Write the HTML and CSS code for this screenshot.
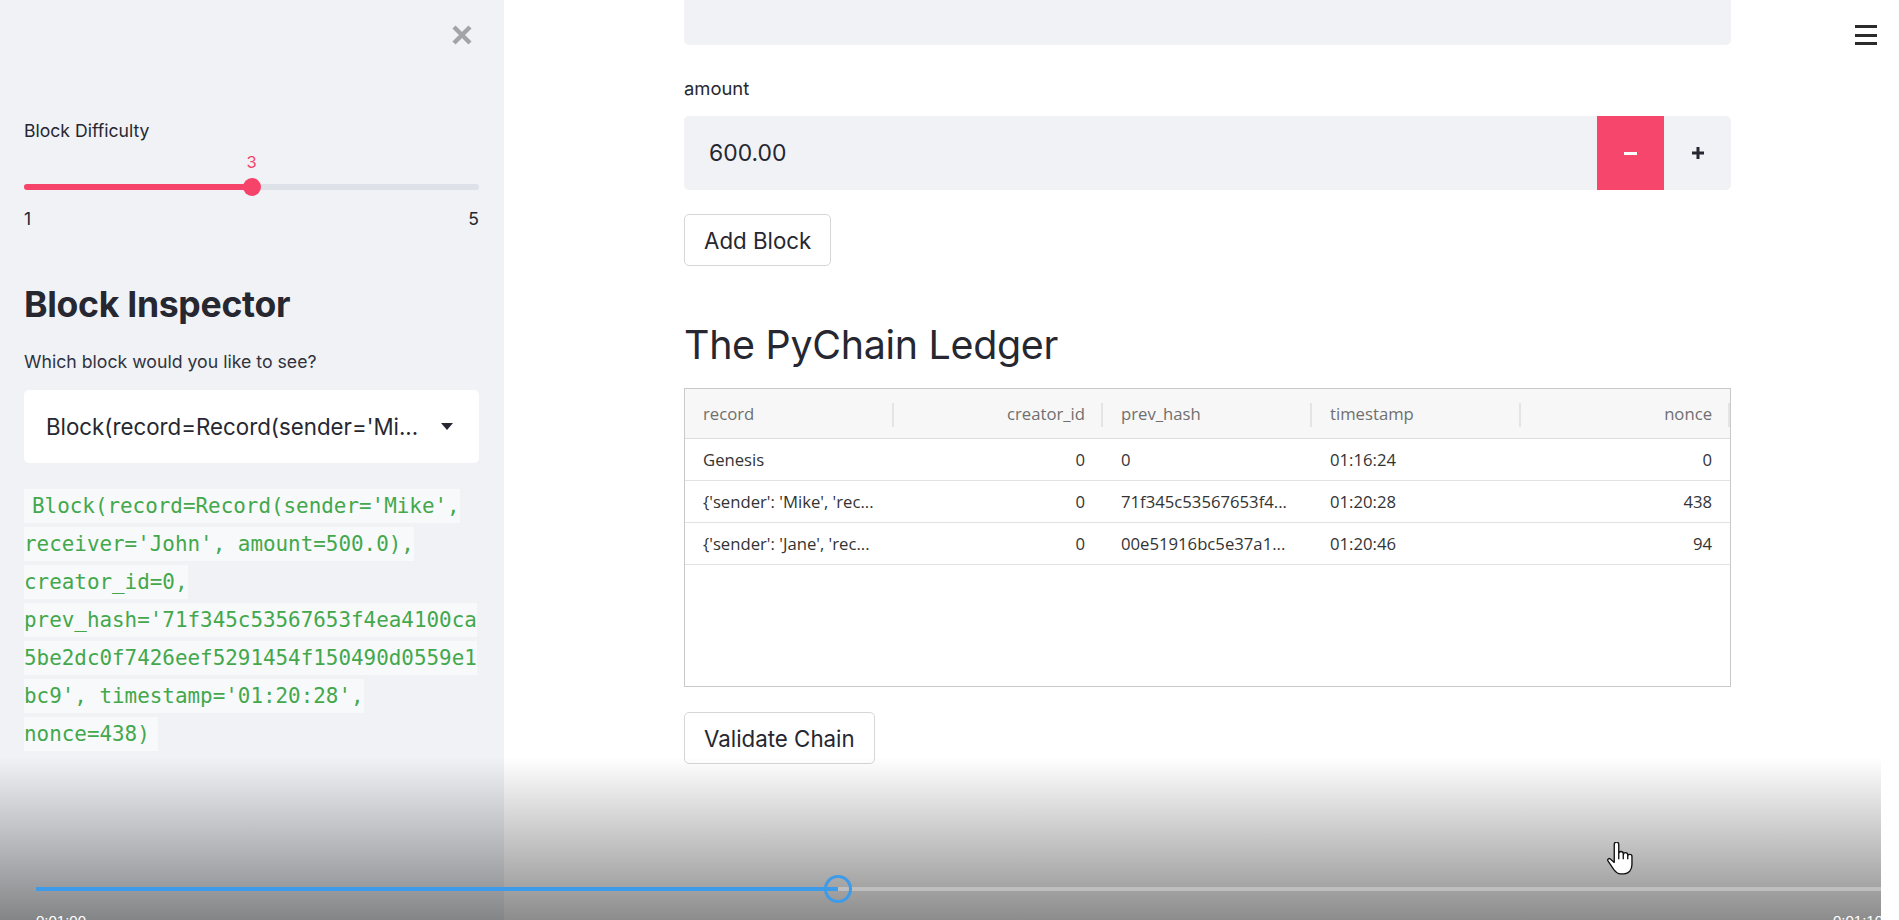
FILE: index.html
```html
<!DOCTYPE html>
<html lang="en">
<head>
<meta charset="utf-8">
<title>PyChain</title>
<link rel="stylesheet" href="styles.css">
</head>
<body>
<div class="app">
  <aside class="sidebar">
    <div class="close-row">
      <svg class="close-icon" viewBox="0 0 22 20" width="22" height="20"><path d="M3 2 L19 18 M19 2 L3 18" stroke="#a3a3a8" stroke-width="4.4" fill="none"/></svg>
    </div>
    <div class="label">Block Difficulty</div>
    <div class="slider">
      <div class="slider-value-row"><span class="slider-value" style="left:50%">3</span></div>
      <div class="slider-rail">
        <div class="slider-fill" style="width:50%"></div>
        <div class="slider-thumb" style="left:50%"></div>
      </div>
      <div class="slider-minmax"><span>1</span><span>5</span></div>
    </div>
    <h2 class="side-heading">Block Inspector</h2>
    <div class="side-text">Which block would you like to see?</div>
    <div class="select">
      <span class="select-text">Block(record=Record(sender='Mi...</span>
      <svg class="caret" viewBox="0 0 12 7" width="12" height="7"><path d="M0 0 H12 L6 7 Z" fill="#262730"/></svg>
    </div>
    <div class="code-wrap"><code class="code">Block(record=Record(sender='Mike',<br>receiver='John', amount=500.0),<br>creator_id=0,<br>prev_hash='71f345c53567653f4ea4100ca<br>5be2dc0f7426eef5291454f150490d0559e1<br>bc9', timestamp='01:20:28',<br>nonce=438)</code></div>
  </aside>

  <main class="main">
    <div class="content">
      <div class="top-input"></div>
      <div class="field-label">amount</div>
      <div class="number-input">
        <div class="number-value">600.00</div>
        <div class="step-btn step-minus"><span class="minus-glyph"></span></div>
        <div class="step-btn step-plus">
          <svg viewBox="0 0 12 12" width="12" height="12"><path d="M6 0 V12 M0 6 H12" stroke="#262730" stroke-width="3"/></svg>
        </div>
      </div>
      <div class="btn-row"><button class="btn">Add Block</button></div>
      <h1 class="ledger-title">The PyChain Ledger</h1>
      <div class="table">
        <div class="thead">
          <div class="th">record</div>
          <div class="th num">creator_id</div>
          <div class="th">prev_hash</div>
          <div class="th">timestamp</div>
          <div class="th num">nonce</div>
        </div>
        <div class="tr">
          <div class="td">Genesis</div>
          <div class="td num">0</div>
          <div class="td">0</div>
          <div class="td">01:16:24</div>
          <div class="td num">0</div>
        </div>
        <div class="tr">
          <div class="td">{'sender': 'Mike', 'rec...</div>
          <div class="td num">0</div>
          <div class="td">71f345c53567653f4...</div>
          <div class="td">01:20:28</div>
          <div class="td num">438</div>
        </div>
        <div class="tr">
          <div class="td">{'sender': 'Jane', 'rec...</div>
          <div class="td num">0</div>
          <div class="td">00e51916bc5e37a1...</div>
          <div class="td">01:20:46</div>
          <div class="td num">94</div>
        </div>
      </div>
      <div class="btn-row validate-row"><button class="btn">Validate Chain</button></div>
    </div>
  </main>
</div>

<div class="hamburger"><span></span><span></span><span></span></div>

<div class="player">
  <div class="progress-played"></div>
  <div class="progress-rest"></div>
  <div class="progress-thumb"></div>
  <div class="time time-left">0:01:00</div>
  <div class="time time-right">0:01:10</div>
  <svg class="hand" viewBox="0 0 18 22" width="27" height="33">
    <path d="M5.5 1.6 a1.5 1.5 0 0 1 3 0 V7.8 a1.5 1.5 0 0 1 3 0 V8.6 a1.5 1.5 0 0 1 3 0 V9.6 a1.4 1.4 0 0 1 2.8 0 V15 c0 3.5 -2 6.2 -5.5 6.2 H9.6 c-2 0 -3 -1 -4.5 -3 L1.3 12.6 c-0.6 -1 0.6 -2.1 1.6 -1.3 L5.5 13.6 Z M8.5 8 V11.5 M11.5 8.6 V11.5 M14.5 9.6 V11.5" fill="#fff" stroke="#111" stroke-width="0.9" stroke-linejoin="round"/>
  </svg>
</div>
</body>
</html>
```

FILE: styles.css
```css
* { box-sizing: border-box; margin: 0; padding: 0; }
html, body { width: 1899px; height: 920px; overflow: hidden; }
body {
  font-family: Inter, "Noto Sans", sans-serif;
  color: #262730;
  background: #ffffff;
  position: relative;
}
.app { display: flex; height: 920px; }

/* Sidebar */
.sidebar {
  width: 504px;
  flex: none;
  background: #f0f2f6;
  padding: 25px 25px 0 24px;
}
.close-row { display: flex; justify-content: flex-end; padding-right: 6px; height: 20px; }
.label { margin-top: 76px; font-size: 17.6px; line-height: 20px; }
.slider { margin-top: 10.5px; }
.slider-value-row { position: relative; height: 20px; }
.slider-value {
  position: absolute; top: 0; transform: translateX(-50%);
  color: #f5436a; font-size: 16.5px; line-height: 20px;
}
.slider-rail { position: relative; margin-top: 6px; height: 18px; }
.slider-rail::before {
  content: ""; position: absolute; left: 0; right: 0; top: 6px; height: 6px;
  border-radius: 3px; background: #dfe1e9;
}
.slider-fill {
  position: absolute; left: 0; top: 6px; height: 6px; border-radius: 3px; background: #f5436a;
}
.slider-thumb {
  position: absolute; top: 0; width: 18px; height: 18px; border-radius: 50%;
  background: #f5436a; transform: translateX(-50%);
}
.slider-minmax {
  display: flex; justify-content: space-between; margin-top: 13px;
  font-size: 17.5px; line-height: 20px;
}
.side-heading { margin-top: 54px; font-size: 35.6px; font-weight: 700; line-height: 44px; letter-spacing: -0.3px; }
.side-text { margin-top: 23px; font-size: 17.7px; line-height: 24px; color: #31333f; }
.select {
  margin-top: 16px; height: 73px; background: #ffffff; border-radius: 5px;
  display: flex; align-items: center; justify-content: space-between;
  padding: 0 26px 0 22px; font-size: 22.3px;
}
.select-text { white-space: nowrap; }
.code-wrap {
  margin-top: 24.5px; line-height: 38px;
  font-family: "DejaVu Sans Mono", "Liberation Mono", monospace; font-size: 20.9px;
}
.code {
  font-family: inherit; background: #f8f9fb; color: #43a84c;
  padding: 5px 8px;
}

/* Main */
.main { flex: 1; padding-left: 180px; }
.content { width: 1047px; }
.top-input { height: 45px; background: #f0f2f6; border-radius: 0 0 5px 5px; }
.field-label { margin-top: 33px; font-size: 18.4px; line-height: 20px; }
.number-input {
  margin-top: 18px; height: 74px; display: flex; background: #f0f2f6;
  border-radius: 5px; overflow: hidden;
}
.number-value { flex: 1; padding-left: 25px; font-size: 22.9px; display: flex; align-items: center; }
.step-btn { width: 67px; display: flex; align-items: center; justify-content: center; }
.step-minus { background: #f6466b; }
.minus-glyph { width: 13px; height: 3px; background: #ffffff; }
.btn-row { margin-top: 24px; display: flex; }
.btn {
  height: 52px; padding: 0 19px; border: 1px solid #d6d6d9; border-radius: 5px;
  background: #ffffff; font-family: inherit; font-size: 22.3px; color: #262730;
}
.ledger-title { margin-top: 53px; font-size: 39.4px; line-height: 52px; font-weight: 400; letter-spacing: -0.3px; }
.table { margin-top: 17px; height: 299px; border: 1px solid #c9c9c9; font-family: "Open Sans", "Noto Sans", sans-serif; font-size: 16.7px; }
.thead, .tr { display: grid; grid-template-columns: repeat(5, 1fr); }
.thead { height: 50px; background: #f7f7f7; border-bottom: 1px solid #dcdcdc; color: #6f6f6f; }
.tr { height: 42px; border-bottom: 1px solid #e2e2e2; color: #333333; }
.th, .td { display: flex; align-items: center; padding: 0 18px; white-space: nowrap; }
.th { position: relative; }
.th::after {
  content: ""; position: absolute; right: 0; top: 14px; height: 24px; width: 2px; background: #e4e4e4;
}
.num { justify-content: flex-end; }
.validate-row { margin-top: 25px; }

/* Floating menu */
.hamburger {
  position: absolute; top: 25px; right: 22px; width: 22px; display: flex; flex-direction: column; gap: 5.5px;
}
.hamburger span { height: 3px; background: #2b2b2b; }

/* Video player overlay */
.player {
  position: absolute; left: 0; bottom: 0; width: 1881px; height: 163px; overflow: hidden;
  background: linear-gradient(to bottom, rgba(0,0,0,0) 0%, rgba(0,0,0,0.2) 45%, rgba(0,0,0,0.45) 100%);
}
.progress-played { position: absolute; left: 36px; top: 130px; width: 802px; height: 4px; background: #3d9be9; }
.progress-rest { position: absolute; left: 838px; right: 0; top: 130px; height: 4px; background: rgba(255,255,255,0.3); }
.progress-thumb {
  position: absolute; left: 824px; top: 118px; width: 28px; height: 28px;
  border: 3px solid #3d9be9; border-radius: 50%;
}
.time { position: absolute; top: 155px; font-family: "Liberation Sans", Arial, sans-serif; font-size: 15px; color: #ffffff; }
.time-left { left: 36px; }
.time-right { right: -2px; }
.hand { position: absolute; left: 1606px; top: 85px; }
```
